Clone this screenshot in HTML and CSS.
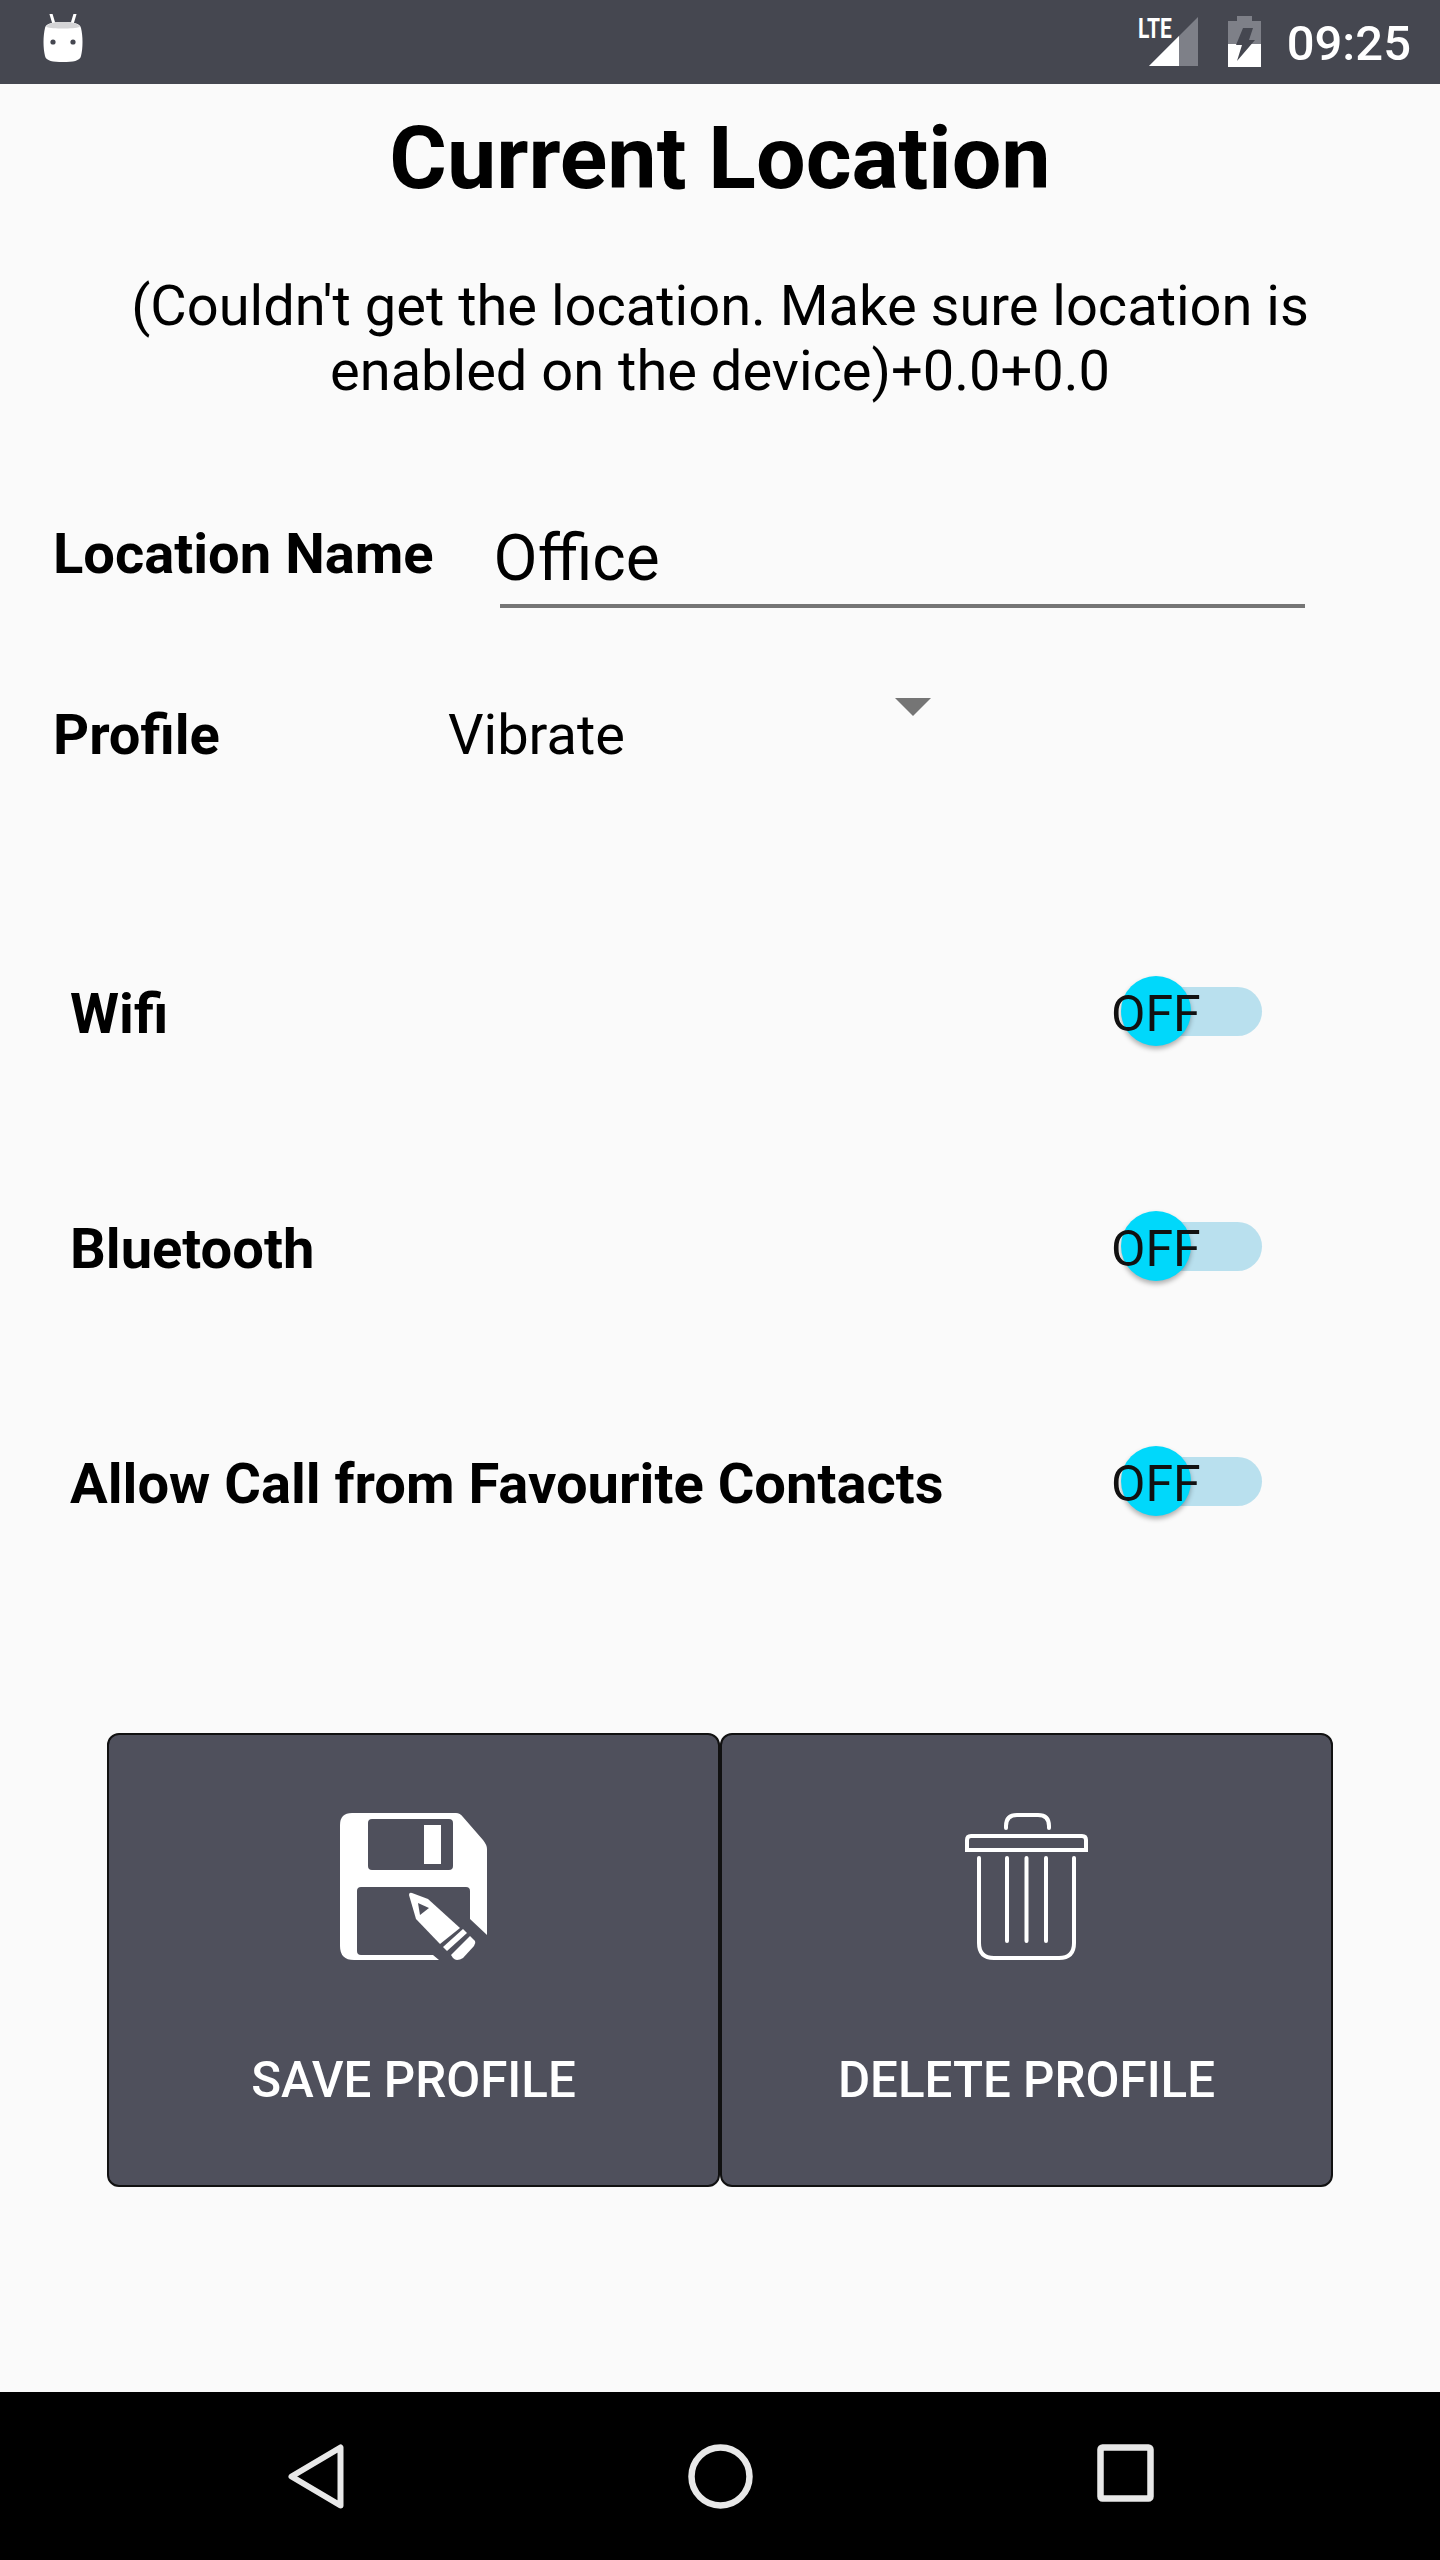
FILE: index.html
```html
<!DOCTYPE html>
<html lang="en">
<head>
	<meta charset="UTF-8">
	<title>Current Location</title>
	<link rel="stylesheet" href="styles.css">
</head>
<body>
	<div class="statusbar">
		<svg class="android" width="40" height="50" viewBox="0 0 40 50">
			<path d="M8 0l3 10M32 0l-3 10" stroke="#fff" stroke-width="3" stroke-linecap="round"/>
			<path d="M20 8C30 8 37 9 38 14C40 22 40 34 38 42C37 47 30 48 20 48C10 48 3 47 2 42C0 34 0 22 2 14C3 9 10 8 20 8Z" fill="#fff"/>
			<path d="M3 13C5 9 11 8 20 8C29 8 35 9 37 13C30 15 10 15 3 13Z" fill="#d4d4d6"/>
			<circle cx="10" cy="28" r="2.6" fill="#454750"/>
			<circle cx="30" cy="28" r="2.6" fill="#454750"/>
		</svg>
		<div class="status-right">
			<span class="lte">LTE</span>
			<svg class="signal" width="49" height="49" viewBox="0 0 49 49">
				<path d="M0 49L49 0V49Z" fill="#7e8088"/>
				<path d="M0 49L30 19V49Z" fill="#fff"/>
			</svg>
			<svg class="battery" width="33" height="51" viewBox="0 0 33 51">
				<path d="M9 0H24V5H33V28H0V5H9Z" fill="#7e8088"/>
				<path d="M0 28H33V51H0Z" fill="#fff"/>
				<path d="M15 12H25L21 24H27L9 45L14 29H8Z" fill="#454750"/>
			</svg>
			<span class="clock">09:25</span>
		</div>
	</div>

	<div class="content">
		<h1 class="title">Current Location</h1>
		<p class="address">(Couldn't get the location. Make sure location is<br>enabled on the device)+0.0+0.0</p>

		<div class="field-row">
			<label class="label">Location Name</label>
			<div class="name-input">Office</div>
		</div>

		<div class="profile-row">
			<span class="label">Profile</span>
			<div class="spinner">
				<span>Vibrate</span>
				<i class="caret"></i>
			</div>
		</div>

		<div class="toggles">
			<div class="toggle-row">
				<span class="label">Wifi</span>
				<div class="switch"><i class="track"></i><i class="thumb"></i><span class="off">OFF</span></div>
			</div>
			<div class="toggle-row">
				<span class="label">Bluetooth</span>
				<div class="switch"><i class="track"></i><i class="thumb"></i><span class="off">OFF</span></div>
			</div>
			<div class="toggle-row">
				<span class="label">Allow Call from Favourite Contacts</span>
				<div class="switch"><i class="track"></i><i class="thumb"></i><span class="off">OFF</span></div>
			</div>
		</div>

		<div class="buttons">
			<button class="btn">
				<svg width="147" height="147" viewBox="0 0 147 147">
					<path fill="#fff" fill-rule="evenodd" d="M12 0H116Q120 0 123 4L143 27Q147 32 147 36V122L130 106V78Q130 74 126 74H21Q17 74 17 78V138Q17 142 21 142H93L99 147H14Q0 147 0 133V12Q0 0 12 0ZM32 6Q28 6 28 10V53Q28 57 32 57H109Q113 57 113 53V10Q113 6 109 6Z"/>
					<path fill="#fff" d="M84 12H101V51H84Z"/>
					<path fill="#fff" d="M69 82Q69 79 72 80L88 86L120 115L100 131L76 106Z"/>
					<path fill="#4f505c" d="M78 90L89 95L80 102Z"/>
					<path fill="#fff" d="M103 134L123 116L127 120L107 138Z"/>
					<path fill="#fff" d="M111 142L130 123L135 128Q136 130 134 133L123 145Q120 147 117 147Q115 147 113 145Z"/>
				</svg>
				<span>SAVE PROFILE</span>
			</button>
			<button class="btn">
				<svg width="123" height="147" viewBox="0 0 123 147">
					<g fill="none" stroke="#fff" stroke-width="4" stroke-linecap="round">
						<path d="M41 15V13Q41 2 52 2H73Q84 2 84 13V15"/>
						<path d="M2 37V27Q2 23 6 23H117Q121 23 121 27V37Z"/>
						<path d="M14 45V130Q14 145 29 145H94Q109 145 109 130V45"/>
						<path d="M42 45V128M61.500 45V128M81 45V128"/>
					</g>
				</svg>
				<span>DELETE PROFILE</span>
			</button>
		</div>
	</div>

	<div class="navbar">
		<svg width="56" height="65" viewBox="0 0 56 65">
			<path d="M52.500 3.500V61.500L3.500 32.500Z" fill="none" stroke="#e8e8e8" stroke-width="6" stroke-linejoin="round"/>
		</svg>
		<svg width="65" height="65" viewBox="0 0 65 65">
			<circle cx="32.500" cy="32.500" r="29" fill="none" stroke="#e8e8e8" stroke-width="6.500"/>
		</svg>
		<svg width="57" height="58" viewBox="0 0 57 58">
			<rect x="3.500" y="3.500" width="50" height="51" rx="2" fill="none" stroke="#e8e8e8" stroke-width="6.500"/>
		</svg>
	</div>
</body>
</html>
```

FILE: styles.css
```css
* {margin: 0;padding: 0;box-sizing: border-box;}
html, body {width: 1440px;height: 2560px;overflow: hidden;}
body {display: flex;flex-direction: column;background: #fafafa;font-family: Roboto, "Liberation Sans", sans-serif;color: #000;}

.statusbar {height: 84px;background: #454750;display: flex;justify-content: space-between;align-items: flex-start;padding: 14px 29px 0 43px;flex-shrink: 0;}
.status-right {display: flex;align-items: flex-start;color: #fff;}
.lte {font-size: 28px;font-weight: 700;line-height: 24px;margin: 3px -13px 0 0;transform: scaleX(.75);transform-origin: left;width: 32px;}
.signal {margin: 3px 0 0 -8px;}
.battery {margin: 2px 0 0 30px;}
.clock {font-size: 49px;font-weight: 500;line-height: 57px;margin: 1px 0 0 26px;}

.content {flex: 1;}
.title {font-size: 88px;font-weight: 700;line-height: 103px;text-align: center;margin-top: 22px;}
.address {font-size: 56px;line-height: 65px;text-align: center;margin-top: 65px;}

.label {font-size: 56.1px;font-weight: 700;line-height: 66px;}
.field-row {display: flex;padding-left: 53px;margin-top: 117px;height: 90px;}
.name-input {font-size: 64px;line-height: 74px;margin: 1px 0 0 66px;padding-left: 0;width: 805px;border-bottom: 4px solid #757575;height: 86px;text-indent: -6px;}
.profile-row {display: flex;padding-left: 53px;margin-top: 91px;}
.spinner {display: flex;margin-left: 228px;width: 483px;font-size: 56px;line-height: 66px;justify-content: space-between;}
.caret {width: 0;height: 0;border-left: 18px solid transparent;border-right: 18px solid transparent;border-top: 18px solid #757575;margin: -4px 0 0 0;}

.toggles {margin-top: 211px;padding: 0 178px 0 70px;}
.toggle-row {display: flex;justify-content: space-between;align-items: center;height: 70px;margin-bottom: 165px;}
.switch {position: relative;width: 150px;height: 70px;margin-top: -6px;}
.track {position: absolute;left: 44px;top: 11px;width: 106px;height: 49px;border-radius: 25px;background: #b9e0ee;}
.thumb {position: absolute;left: 9px;top: 0;width: 70px;height: 70px;border-radius: 50%;background: #00d8fb;box-shadow: 0 3px 5px rgba(0, 0, 0, .3);}
.off {position: absolute;left: -1px;top: 10px;font-size: 50px;line-height: 57px;color: #111;}

.buttons {display: flex;justify-content: center;margin-top: 214px;padding: 0 107px;}
.btn {flex: 1;height: 454px;background: #4f505c;border: 2px solid #111;border-radius: 12px;color: #fff;font-family: inherit;font-size: 49.3px;font-weight: 500;display: flex;flex-direction: column;align-items: center;padding-top: 78px;}
.btn span {margin-top: 92px;line-height: 57px;}

.navbar {height: 168px;background: #000;display: flex;justify-content: space-between;align-items: flex-start;padding: 52px 286px 0 288px;flex-shrink: 0;}
```
